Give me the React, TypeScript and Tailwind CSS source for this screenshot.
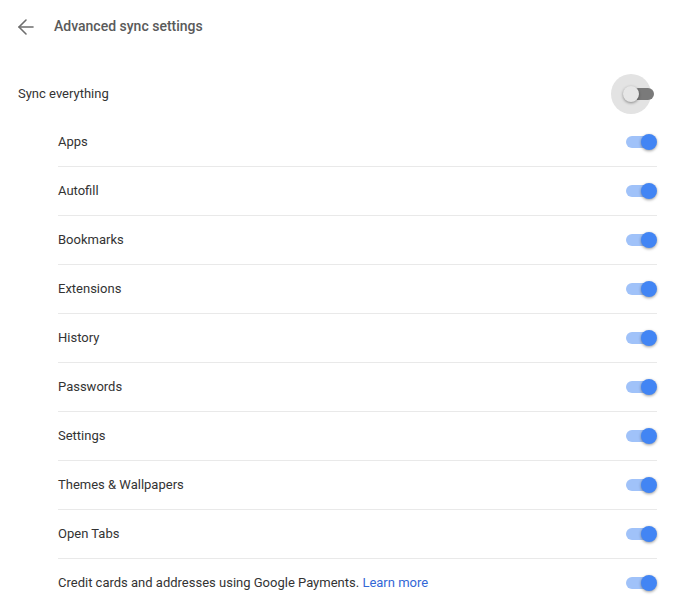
import { ArrowLeft } from 'lucide-react'

const ITEMS = [
  'Apps',
  'Autofill',
  'Bookmarks',
  'Extensions',
  'History',
  'Passwords',
  'Settings',
  'Themes & Wallpapers',
  'Open Tabs',
]

function Toggle({ on, focused }: { on: boolean; focused?: boolean }) {
  return (
    <div className="relative h-4 w-[34px] shrink-0">
      {focused && (
        <span className="absolute top-[-12px] left-[-12px] size-10 rounded-full bg-[#e3e3e3]" />
      )}
      <span
        className={
          on
            ? 'absolute top-[2px] left-[3px] h-3 w-7 rounded-full bg-[#a0c2f9]'
            : 'absolute top-[2px] left-[3px] h-3 w-7 rounded-full bg-[#7a7a7a]'
        }
      />
      <span
        className={
          on
            ? 'absolute top-0 left-[18px] size-4 rounded-full bg-[#4285f4] shadow-[0_1px_3px_rgba(0,0,0,0.4)]'
            : 'absolute top-0 left-0 size-4 rounded-full bg-[#e6e6e6] shadow-[0_1px_3px_rgba(0,0,0,0.4)]'
        }
      />
    </div>
  )
}

export default function App() {
  return (
    <div className="min-h-[599px] bg-white font-['Roboto',sans-serif] text-[13px] text-[#333]">
      <header className="flex h-[53px] items-center pl-[14px]">
        <ArrowLeft className="size-6 text-[#6e6e6e]" strokeWidth={1.6} aria-hidden />
        <h1 className="ml-4 text-[14px] font-medium text-[#5a5a5a]">Advanced sync settings</h1>
      </header>

      <div className="mt-[17px] flex h-12 items-center justify-between pr-[20px] pl-[18px]">
        <span>Sync everything</span>
        <Toggle on={false} focused />
      </div>

      <div className="ml-[58px] mr-[20px]">
        {ITEMS.map((item) => (
          <div
            key={item}
            className="flex h-[49px] items-center justify-between border-b border-[#e9e9e9]"
          >
            <span>{item}</span>
            <Toggle on />
          </div>
        ))}
        <div className="flex h-12 items-center justify-between">
          <span>
            Credit cards and addresses using Google Payments.{' '}
            <a href="#" className="text-[#3367d6]">
              Learn more
            </a>
          </span>
          <Toggle on />
        </div>
      </div>
    </div>
  )
}
